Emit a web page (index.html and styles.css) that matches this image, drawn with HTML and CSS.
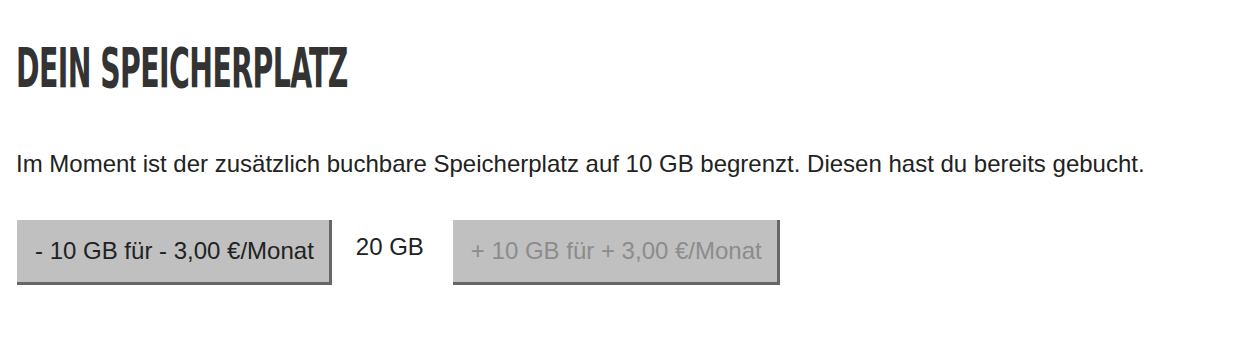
FILE: index.html
```html
<!DOCTYPE html>
<html lang="de">
<head>
<meta charset="utf-8">
<title>Dein Speicherplatz</title>
<link rel="stylesheet" href="styles.css">
</head>
<body>
<section class="storage">
  <h1 class="title">DEIN SPEICHERPLATZ</h1>
  <p class="info">Im Moment ist der zusätzlich buchbare Speicherplatz auf 10 GB begrenzt. Diesen hast du bereits gebucht.</p>
  <div class="controls">
    <button class="btn" type="button">- 10 GB für - 3,00 €/Monat</button>
    <span class="amount">20 GB</span>
    <button class="btn btn-disabled" type="button" disabled>+ 10 GB für + 3,00 €/Monat</button>
  </div>
</section>
</body>
</html>
```

FILE: styles.css
```css
html, body {
  margin: 0;
  padding: 0;
  background: #ffffff;
}

.storage {
  padding: 38px 16px 0 16px;
  font-family: "Liberation Sans", Arial, sans-serif;
  color: #222222;
}

.title {
  margin: 0;
  font-family: "DejaVu Sans Condensed", "DejaVu Sans", sans-serif;
  font-weight: bold;
  font-size: 55px;
  line-height: 60px;
  color: #333333;
  letter-spacing: -1px;
  transform: scaleX(0.573);
  transform-origin: left center;
  white-space: nowrap;
}

.info {
  margin: 52px 0 0 0;
  font-size: 24px;
  line-height: 28px;
}

.controls {
  margin-top: 42px;
  display: flex;
  align-items: flex-start;
}

.btn {
  -webkit-appearance: none;
  appearance: none;
  font-family: "Liberation Sans", Arial, sans-serif;
  font-size: 24px;
  color: #222222;
  background: #c0c0c0;
  border: 0;
  border-right: 3px solid #666666;
  border-bottom: 3px solid #666666;
  border-radius: 0;
  padding: 17px 15px 17px 18px;
  line-height: 28px;
  margin: 0 0 0 1px;
}

.btn-disabled {
  color: #8c8c8c;
}

.amount {
  font-size: 24px;
  line-height: 28px;
  padding-top: 13px;
  margin: 0 28px 0 24px;
}
```
